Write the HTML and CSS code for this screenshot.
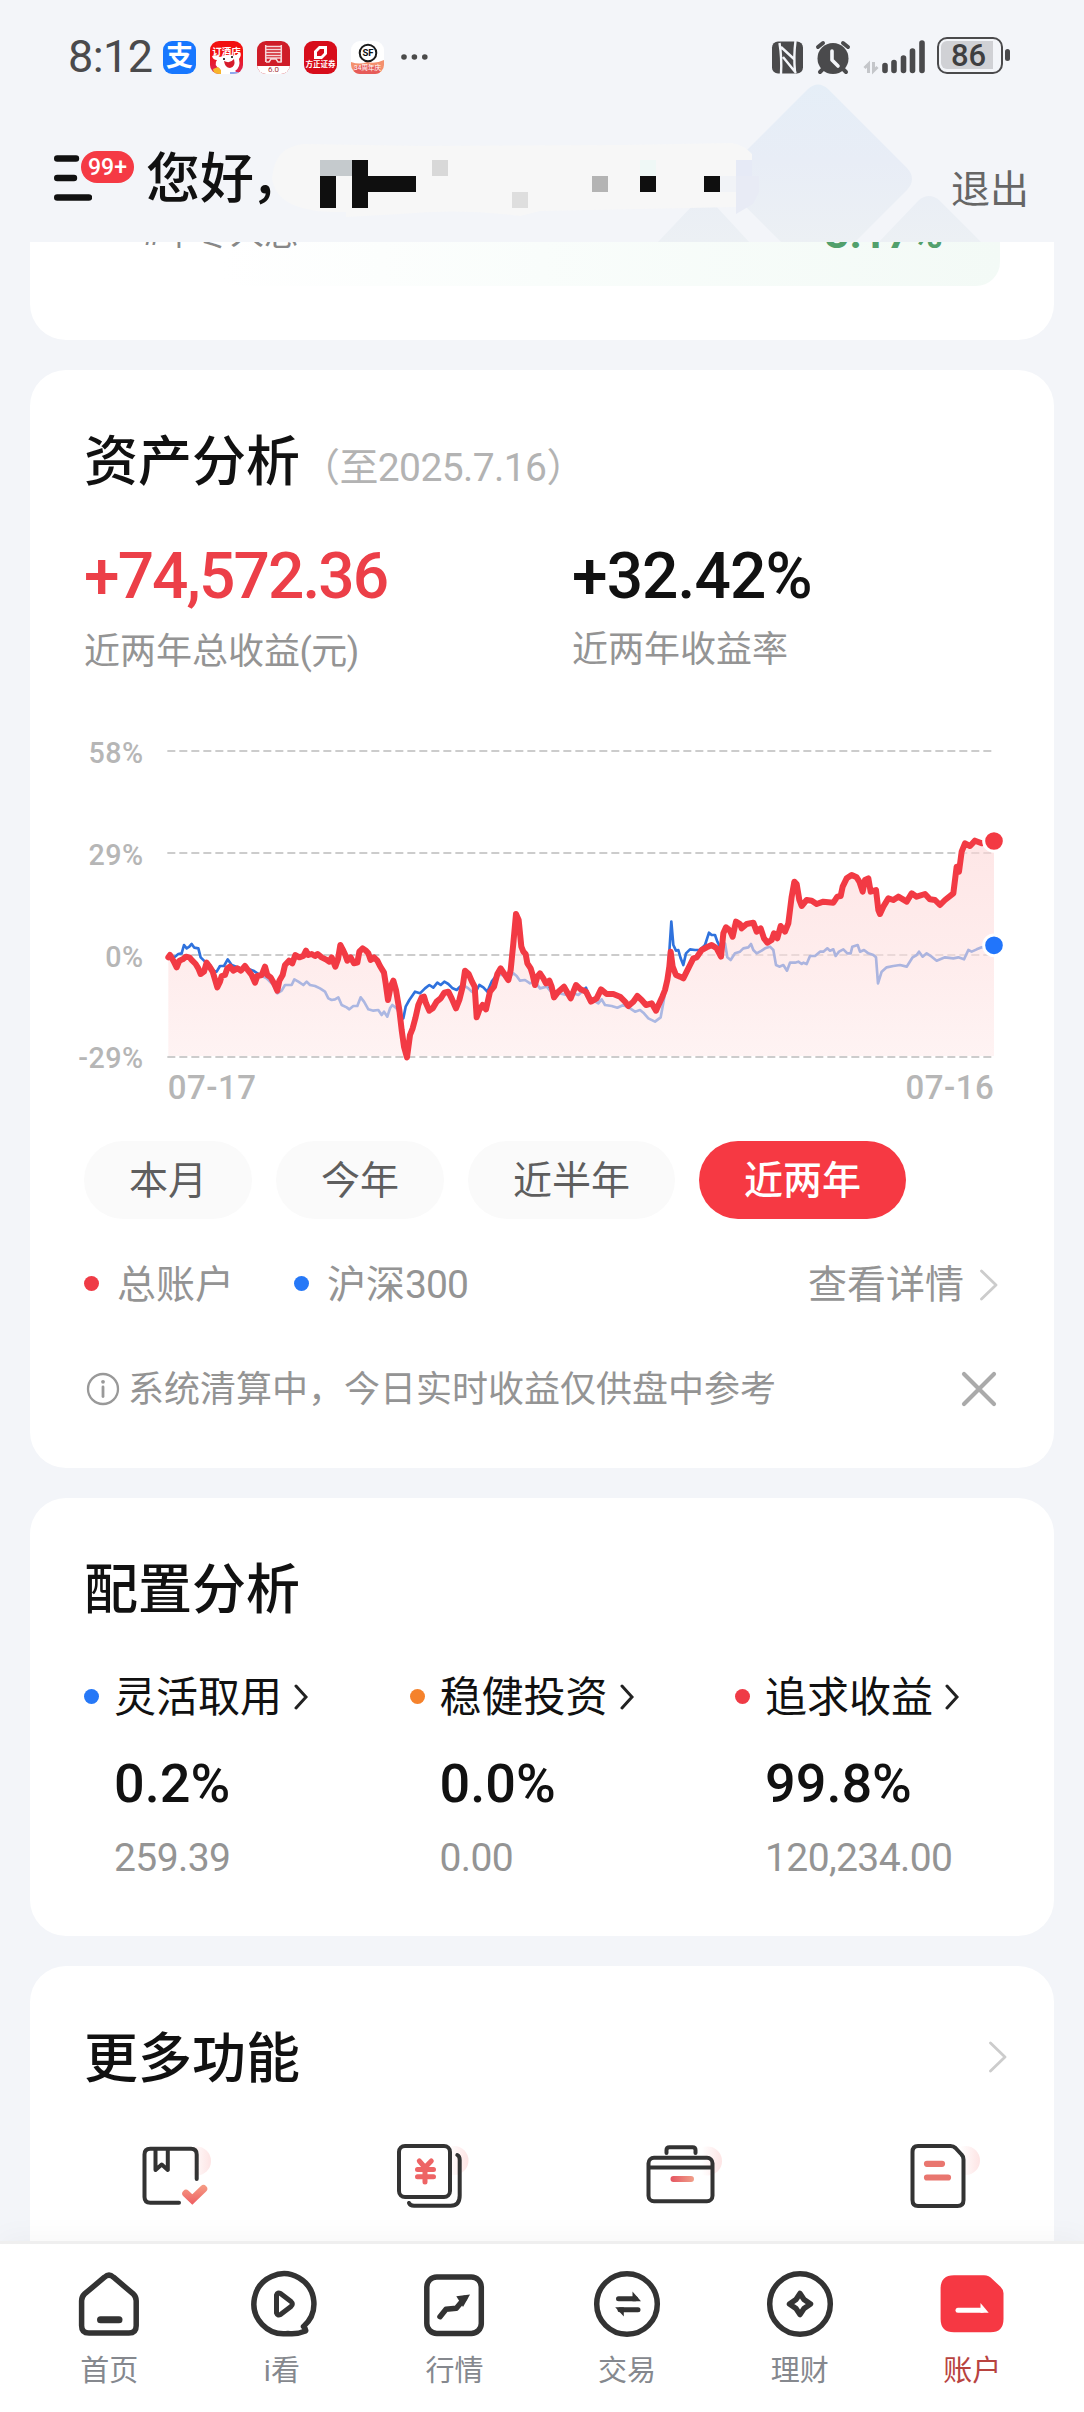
FILE: index.html
```html
<!DOCTYPE html>
<html lang="zh-CN">
<head>
<meta charset="utf-8">
<title>账户</title>
<link rel="stylesheet" href="styles.css">
</head>
<body>
<div class="screen">
  <header class="header">
    <svg class="header-art" width="1084" height="242" viewBox="0 0 1084 242">
      <defs>
        <linearGradient id="dia" x1="0" y1="80" x2="0" y2="242" gradientUnits="userSpaceOnUse"><stop offset="0" stop-color="#e5eef7"/><stop offset=".5" stop-color="#e8edf6"/><stop offset="1" stop-color="#ecf0f4"/></linearGradient>
      </defs>
      <g fill="url(#dia)">
        <path d="M808 89q10-9 20 0l79 79q10 11 0 22l-79 79h-20l-79-79q-10-11 0-22z"/>
        <path d="M694 204q10-9 20 0l37 40h-95z"/>
        <path d="M919 200q10-8 20 0l44 44h-106z"/>
      </g>
      <path fill="#f7f7f7" d="M272 178q3-32 32-34l120 2 200-1 108-2q12 2 20 11v7h-4v16h2q-4 14-14 30l-96 2-100 2-20 5q-60-8-120-2l-54 3v-5q-70 2-74-34z"/>
      <path fill="#c5cacd" d="M320 160h32v16h-32z"/>
      <path fill="#0f0f0f" d="M320 176h16v32h-16zM352 160h16v16h48v16h-48v16h-16zM640 176h16v16h-16zM704 176h16v16h-16z"/>
      <path fill="#d8d8d8" d="M432 160h16v16h-16z"/>
      <path fill="#dedede" d="M512 192h16v16h-16z"/>
      <path fill="#b4b4b4" d="M592 176h16v16h-16z"/>
      <path fill="#eff8f6" d="M640 160h16v16h-16z"/>
      <path fill="#e6eaf6" d="M736 160h16v16h-16z"/>
      <path fill="#f1f3f7" d="M720 176h16v16h-16z"/>
      <path fill="#e8ebf5" d="M736 176h23v16l-6 12-17 10z"/>
    </svg>

    <div class="status">
      <span class="clock">8:12</span>
      <div class="apps">
        <span class="app alipay">支</span>
        <span class="app hotel">
          <span class="hotel-text">订酒店</span>
          <svg width="33" height="33" viewBox="0 0 33 33"><path fill="#fff" d="M2 15q5-2 8 1 8-4 15-1l5-4q2 3-1 7 2 8-4 12l4 3H9q2-3 1-5-7-4-3-9-4 0-5-4z"/><path fill="#d61c2c" d="M14 20q6 3 10-2 2 8-4 9-5 0-6-7z"/><circle cx="14" cy="18" r="1"/><circle cx="22" cy="16" r="1"/><path fill="#f7b52c" d="M3 28l5-2 3 3v4H4z"/><path fill="#8fa8ef" d="M20 31h9l-3 2h-6z"/></svg>
        </span>
        <span class="app bank">
          <svg width="33" height="33" viewBox="0 0 33 33"><path fill="#fff" d="M0 25h33v8H0z"/><path fill="none" stroke="#f6d5d8" stroke-width="1.500" d="M8 5.500h17M8 8.500h17M8 11.500h17M8 14.500h17M8.700 4v17M24.300 4v17M9 21v-4h15v4h-3l-2-3h-5l-2 3H9"/></svg>
          <span class="bank-text">6.0</span>
        </span>
        <span class="app founder">
          <svg width="33" height="20" viewBox="0 0 33 20"><path fill="#fff" fill-rule="evenodd" d="M15 5h8v8l-5 5h-8v-8zm1 3-3 3v4h4l3-3V8z"/></svg>
          <span class="founder-text">方正证券</span>
        </span>
        <span class="app sf">
          <svg width="33" height="33" viewBox="0 0 33 33"><path fill="#f4906e" d="M0 21q9 3 16 0 9 2 17-2v14H0z"/><path fill="#e65b59" d="M4 26q12-4 25 0v7H3z"/><circle cx="17" cy="12" r="8.300" fill="none" stroke="#1a1a1a" stroke-width="2"/></svg>
          <span class="sf-logo">SF</span><span class="sf-text">34周年庆</span>
        </span>
      </div>
      <svg class="more" width="28" height="8" viewBox="0 0 28 8"><g fill="#4a4a4a"><circle cx="4" cy="4" r="2.800"/><circle cx="14.400" cy="4" r="2.800"/><circle cx="24.800" cy="4" r="2.800"/></g></svg>
      <svg class="signals" width="160" height="44" viewBox="765 34 160 44">
        <rect x="772" y="40.500" width="31" height="32" rx="6" fill="#4a4a4c"/>
        <path fill="none" stroke="#f3f5f9" stroke-width="2.400" d="M779.500 42q2.500 15 1.500 31M795.500 40q-2 15-.5 31M781 46l13 12M783 56l13 16"/>
        <circle cx="833" cy="57.500" r="15.500" fill="#4a4a4c"/>
        <path stroke="#4a4a4c" stroke-width="4" stroke-linecap="round" d="M818 46l5-4M848 46l-5-4M823 68l-3 3M843 68l3 3"/>
        <path fill="none" stroke="#f3f5f9" stroke-width="3.600" stroke-linecap="round" stroke-linejoin="round" d="M832 50v9l6 6"/>
        <path fill="none" stroke="#c4c6ca" stroke-width="3" d="M868.500 72V63l-4 4M873.500 61v9l4-4"/>
        <path stroke="#4a4a4c" stroke-width="5.600" stroke-linecap="round" d="M885 64.500v5M894 61.500v8M903.500 57v12.500M912.500 50v19.500M922 42v27.500"/>
      </svg>
      <div class="battery"><span class="battery-level">86</span></div>
      <span class="battery-nub"></span>
    </div>

    <div class="greeting">
      <svg width="38" height="46" viewBox="0 0 38 46"><path stroke="#111" stroke-width="6.400" stroke-linecap="round" d="M3.200 3.500H22M3.200 23H20M3.200 42.500H35"/></svg>
      <span class="badge">99+</span>
      <span class="hello">您好<span class="comma">，</span></span>
      <a class="logout">退出</a>
    </div>
  </header>

  <main class="content">
    <section class="card peek">
      <div class="peek-strip"><span class="peek-name">#中冬人总</span><span class="peek-value">3.17%</span></div>
    </section>

    <section class="card analysis">
      <div class="title-row"><h2>资产分析</h2><span class="as-of">（至2025.7.16）</span></div>
      <div class="figures">
        <div class="figure"><div class="amount up">+74,572.36</div><div class="caption">近两年总收益<span class="paren">(</span>元<span class="paren">)</span></div></div>
        <div class="figure"><div class="amount ratio">+32.42%</div><div class="caption rate">近两年收益率</div></div>
      </div>
      <svg class="chart" width="970" height="390" viewBox="0 0 2910 1170">
        <defs>
          <linearGradient id="area" x1="0" y1="360" x2="0" y2="1010" gradientUnits="userSpaceOnUse"><stop offset="0" stop-color="#fdd6d6"/><stop offset=".6" stop-color="#fee1e1"/><stop offset="1" stop-color="#feebeb"/></linearGradient>
        </defs>
        <path stroke="#ccc" stroke-width="6" stroke-dasharray="24 12" d="M322 93H2796M322 399H2796M322 705H2796M322 1011H2796"/>
        <polyline class="index-line" points="325,712 345,710 355,702 365,700 372,675 380,685 388,680 395,672 403,683 415,685 422,712 435,725 450,735 460,752 470,755 480,738 492,738 503,718 515,735 540,745 560,745 580,752 600,765 620,775 640,795 652,820 665,812 675,795 695,795 703,778 715,785 730,795 740,785 750,795 765,798 780,805 795,815 805,835 815,840 825,838 835,832 845,855 860,862 868,868 880,858 892,858 902,832 912,845 925,868 940,872 955,870 965,885 972,875 982,890 990,865 997,855 1010,865 1022,890 1030,895 1037,860 1048,840 1065,815 1080,820 1095,805 1108,795 1120,803 1132,788 1142,795 1153,785 1165,792 1178,805 1190,810 1200,800 1210,795 1225,805 1235,815 1245,820 1258,795 1270,802 1282,815 1295,785 1310,765 1330,765 1345,775 1360,760 1370,768 1380,782 1395,780 1410,790 1425,785 1440,805 1460,800 1482,825 1500,820 1520,825 1540,820 1555,825 1578,803 1590,835 1615,850 1625,838 1635,855 1655,858 1672,863 1690,855 1710,865 1725,875 1740,870 1752,880 1765,895 1785,905 1802,892 1807,865 1815,820 1825,740 1834,605 1840,675 1848,692 1855,690 1862,715 1870,735 1878,700 1890,688 1905,690 1920,690 1935,675 1947,638 1955,645 1965,645 1972,665 1985,690 1995,670 2002,712 2012,720 2025,700 2040,695 2050,685 2065,682 2073,672 2080,690 2090,700 2105,692 2115,685 2130,680 2140,690 2148,735 2158,740 2170,735 2181,752 2190,728 2205,728 2215,725 2225,732 2230,728 2240,732 2250,708 2265,708 2280,695 2290,695 2302,685 2310,692 2320,688 2327,708 2337,695 2350,688 2362,700 2372,700 2377,680 2393,675 2400,695 2412,690 2425,700 2440,705 2448,712 2454,790 2465,755 2480,742 2500,738 2520,735 2540,740 2558,712 2570,705 2577,695 2588,710 2600,700 2615,710 2630,722 2655,712 2680,715 2695,712 2712,718 2725,690 2735,695 2750,688 2765,682 2802,675"/>
        <path fill="url(#area)" fill-opacity=".6" d="M325 712 350 742 358 722 378 710 397 722 422 762 440 728 458 755 472 800 485 768 502 745 520 752 555 738 585 788 615 740 652 812 675 735 706 705 738 692 808 725 826 740 841 675 862 722 892 728 908 685 942 712 972 758 984 840 1000 782 1018 870 1041 1012 1050 945 1066 895 1085 832 1108 872 1153 818 1188 865 1215 752 1244 800 1250 892 1278 868 1302 800 1322 745 1345 780 1368 582 1390 695 1425 795 1440 760 1482 830 1512 800 1532 835 1548 795 1593 845 1623 808 1695 845 1732 828 1788 872 1815 810 1832 695 1848 765 1870 775 1900 715 1955 675 1983 710 1998 622 2028 605 2080 608 2122 668 2175 635 2185 610 2203 485 2225 558 2320 548 2375 465 2448 510 2460 582 2485 535 2595 522 2640 555 2680 520 2705 395 2715 370 2802 363V1008H325z"/>
        <polyline class="account-line" points="325,712 330,705 340,722 350,742 358,722 368,718 378,710 388,712 397,722 407,732 415,745 422,762 432,755 440,728 450,742 458,755 464,775 472,802 480,785 485,768 495,765 502,745 510,740 520,752 532,745 543,752 555,738 565,752 575,765 585,788 592,768 605,765 615,740 622,765 632,772 642,790 652,812 658,782 668,765 675,735 687,722 697,730 706,705 718,712 730,708 738,692 745,705 755,702 765,708 773,702 785,712 797,718 808,725 815,712 826,740 834,718 841,675 848,688 856,705 862,722 872,712 882,730 892,728 898,695 908,685 918,692 925,700 932,720 942,712 952,722 960,738 972,758 977,790 984,840 992,800 1000,782 1008,810 1018,870 1025,930 1032,980 1041,1012 1050,945 1058,925 1066,895 1075,855 1085,832 1092,830 1098,850 1108,872 1118,865 1130,845 1142,835 1153,818 1165,815 1175,835 1188,865 1198,840 1208,800 1215,752 1226,762 1236,785 1244,800 1250,892 1258,870 1268,855 1278,868 1290,815 1302,800 1312,762 1322,745 1335,765 1345,780 1352,750 1360,670 1368,582 1376,600 1384,680 1390,695 1397,702 1402,730 1412,745 1418,765 1425,795 1432,770 1440,760 1450,775 1458,790 1468,782 1475,800 1482,832 1495,815 1512,800 1532,835 1548,795 1562,808 1578,815 1593,845 1610,835 1623,808 1640,822 1660,822 1680,830 1695,845 1705,858 1720,845 1732,828 1745,840 1758,855 1775,850 1788,872 1798,850 1807,830 1815,810 1822,780 1828,740 1832,695 1838,740 1848,765 1860,770 1870,775 1880,755 1890,735 1900,715 1910,712 1925,690 1940,682 1955,675 1970,685 1983,710 1990,640 1998,622 2010,632 2018,650 2028,605 2040,612 2045,625 2060,612 2080,608 2090,635 2102,625 2112,655 2122,668 2135,660 2142,640 2152,655 2162,618 2175,635 2185,610 2195,530 2203,485 2210,492 2218,540 2225,558 2240,540 2255,542 2270,552 2290,545 2320,548 2332,530 2342,528 2348,500 2360,475 2375,465 2390,472 2398,485 2408,515 2415,480 2425,475 2432,515 2448,510 2455,570 2460,582 2470,560 2485,535 2500,540 2515,530 2540,545 2555,520 2570,530 2595,522 2610,538 2625,540 2640,555 2655,540 2680,520 2690,440 2697,455 2705,395 2715,370 2730,378 2745,362 2765,370 2802,363"/>
        <g stroke="#fff" stroke-width="9"><circle cx="2802" cy="363" r="31" fill="#f33a43"/><circle cx="2802" cy="676" r="31" fill="#2175fb"/></g>
        <g class="axis" text-anchor="end"><text x="251" y="128">58%</text><text x="251" y="434">29%</text><text x="251" y="740">0%</text><text x="251" y="1043">-29%</text></g>
        <g class="dates"><text x="323" y="1137">07-17</text><text x="2803" y="1137" text-anchor="end">07-16</text></g>
      </svg>
      <div class="chips"><span class="chip">本月</span><span class="chip">今年</span><span class="chip">近半年</span><span class="chip active">近两年</span></div>
      <div class="legend">
        <i class="dot red"></i><span>总账户</span><i class="dot blue second"></i><span>沪深<span class="code">300</span></span>
        <a class="detail">查看详情<svg width="18" height="32" viewBox="0 0 18 32"><path fill="none" stroke="#ccc" stroke-width="2.800" stroke-linecap="round" stroke-linejoin="round" d="M1.500 2 16 16 1.500 30"/></svg></a>
      </div>
      <div class="notice">
        <svg width="34" height="34" viewBox="0 0 34 34"><circle cx="17" cy="17" r="15" fill="none" stroke="#999" stroke-width="2.300"/><path stroke="#999" stroke-width="2.800" stroke-linecap="round" d="M17 15v9.500"/><circle cx="17" cy="9.800" r="1.900" fill="#999"/></svg>
        <span>系统清算中，今日实时收益仅供盘中参考</span>
        <svg class="close" width="36" height="36" viewBox="0 0 36 36"><path stroke="#aaa" stroke-width="4.200" stroke-linecap="round" d="M3 3l30 30M33 3 3 33"/></svg>
      </div>
    </section>

    <section class="card allocation">
      <div class="title-row"><h2>配置分析</h2></div>
      <div class="alloc-grid">
        <div class="alloc"><div class="alloc-name"><i class="dot blue"></i><span>灵活取用</span><svg width="14" height="26" viewBox="0 0 14 26"><path d="M2 2l10 11L2 24"/></svg></div><div class="share">0.2%</div><div class="sum">259.39</div></div>
        <div class="alloc"><div class="alloc-name"><i class="dot orange"></i><span>稳健投资</span><svg width="14" height="26" viewBox="0 0 14 26"><path d="M2 2l10 11L2 24"/></svg></div><div class="share">0.0%</div><div class="sum">0.00</div></div>
        <div class="alloc"><div class="alloc-name"><i class="dot red"></i><span>追求收益</span><svg width="14" height="26" viewBox="0 0 14 26"><path d="M2 2l10 11L2 24"/></svg></div><div class="share">99.8%</div><div class="sum">120,234.00</div></div>
      </div>
    </section>

    <section class="card features">
      <div class="title-row"><h2>更多功能</h2><svg class="more-arrow" width="18" height="32" viewBox="0 0 18 32"><path fill="none" stroke="#ccc" stroke-width="2.800" stroke-linecap="round" stroke-linejoin="round" d="M1.500 2 16 16 1.500 30"/></svg></div>
      <div class="feature-row">
        <svg width="90" height="80" viewBox="0 0 90 80">
          <defs>
            <linearGradient id="glow"><stop offset=".3" stop-color="#fde4e4" stop-opacity="0"/><stop offset="1" stop-color="#fde4e4"/></linearGradient>
            <linearGradient id="heart" x1="0" y1="46" x2="0" y2="64" gradientUnits="userSpaceOnUse"><stop offset="0" stop-color="#f59a83"/><stop offset="1" stop-color="#ee6063"/></linearGradient>
          </defs>
          <circle cx="60.500" cy="21" r="14.500" fill="url(#glow)"/>
          <path class="ink" d="M60.700 39V14.500q0-5.700-5.700-5.700H14.300q-5.800 0-5.800 5.700V57q0 5.700 5.800 5.700H43M19.500 9v21l6.200-5.500 6.100 5.500V9"/>
          <path fill="none" stroke="url(#heart)" stroke-width="7.500" stroke-linecap="round" d="M50 53.500l6.300 6 11.200-10.700"/>
          <path fill="url(#heart)" d="M51 55l5.300 9.300L62 57.500z"/>
        </svg>
        <svg width="90" height="80" viewBox="0 0 90 80">
          <circle cx="64" cy="20.500" r="14.500" fill="url(#glow)"/>
          <rect class="ink" x="9" y="6" width="51" height="51" rx="6"/>
          <path class="ink" d="M67.300 15q2.400 1 2.400 5v35.500q0 10.200-9 10.200H24q-4 0-5-2.700"/>
          <path fill="none" stroke="#ee6465" stroke-width="5" stroke-linecap="round" stroke-linejoin="round" d="M29.300 21l5.700 6.500 6.300-6.500M27.500 29.500h16M27.500 36.700h16M35 28v14"/>
        </svg>
        <svg width="90" height="80" viewBox="0 0 90 80">
          <defs><linearGradient id="dash" x1="24" y1="0" x2="50" y2="0" gradientUnits="userSpaceOnUse"><stop offset="0" stop-color="#e44c5c"/><stop offset="1" stop-color="#f0a08a"/></linearGradient></defs>
          <circle cx="63.500" cy="21" r="14.500" fill="url(#glow)"/>
          <rect class="ink" x="4.500" y="17.800" width="64" height="43.400" rx="5.500"/>
          <path class="ink" d="M5 27.500h63M22.500 13V10q0-2.700 3-2.700h23q3 0 3 2.700v3"/>
          <path stroke="url(#dash)" stroke-width="6" stroke-linecap="round" d="M29.500 38.900l17.500.1"/>
        </svg>
        <svg width="90" height="80" viewBox="0 0 90 80">
          <circle cx="67.500" cy="20.500" r="14.500" fill="url(#glow)"/>
          <path class="ink" d="M20 6h32.500q3 0 5 2l6 6.500q2 2 2 5V60q0 6-6 6H20q-5.500 0-5.500-6V12q0-6 5.500-6z"/>
          <path stroke="#e9766f" stroke-width="6.200" stroke-linecap="round" d="M29 23.800h15M29 37.500h21"/>
        </svg>
      </div>
    </section>
  </main>

  <nav class="tabs">
    <a class="tab"><svg width="72" height="72" viewBox="0 0 72 72"><path class="tab-ink" d="M31.500 9.200q4.500-4 9 0l20 17q2.700 2.700 2.700 6.500v25q0 7.300-7.300 7.300H16q-7.400 0-7.400-7.300v-25q0-3.800 2.700-6.500z"/><path stroke="#333" stroke-width="7" stroke-linecap="round" d="M27.500 51.700h18.500"/></svg>首页</a>
    <a class="tab"><svg width="72" height="72" viewBox="0 0 72 72"><path class="tab-ink" d="M57.500 58.500A30 30 0 1 0 42 65.500q9 1 17.500-2.500 1-1.500-2-4.500z"/><path class="tab-ink thin" d="M30.500 27q1-3 4-1.500l10.500 8q2.700 2.500 0 5l-10.500 8q-3 1.500-4-1.500z"/></svg>i看</a>
    <a class="tab"><svg width="72" height="72" viewBox="0 0 72 72"><rect class="tab-ink" x="8.800" y="8.900" width="54.500" height="56.500" rx="10"/><path class="tab-ink" d="M22 48.700l6-7.400 10.300-1 8.200-9.800"/><path fill="#333" d="M38.300 28.200l13.700-1.700-7 12.500z"/></svg>行情</a>
    <a class="tab"><svg width="72" height="72" viewBox="0 0 72 72"><circle class="tab-ink" cx="36" cy="36" r="30.300"/><path stroke="#333" stroke-width="5" stroke-linecap="round" d="M27.500 30.800h17M29 41.800h18"/><path fill="#333" d="M41.500 23.500l8.500 9.800h-8.500zM32.800 48.500l-8.600-9.200h8.600z"/></svg>交易</a>
    <a class="tab"><svg width="72" height="72" viewBox="0 0 72 72"><circle class="tab-ink" cx="36" cy="36" r="30.300"/><path class="tab-ink" d="M36 25.500l4 6 6.500 4.500-6.500 4.500-4 6-4-6-6.500-4.500 6.500-4.500z"/></svg>理财</a>
    <a class="tab current"><svg width="72" height="72" viewBox="0 0 72 72"><path fill="#f63843" d="M18 7.300h30q5 0 8.500 4l8 7.500q3 3 3 6.500V51q0 13.300-13 13.300H18Q4.600 64.300 4.600 51V20.500Q4.600 7.300 18 7.300z"/><path stroke="#fff" stroke-width="5" stroke-linecap="round" d="M22 42.200h24"/><path fill="#fff" d="M44.500 35l8.200 9.700h-8.200z"/></svg>账户</a>
  </nav>
</div>
</body>
</html>
```
FILE: styles.css
```css
* { box-sizing: border-box; }
body { margin: 0; background: #f3f5f9; color: #111; font-family: Roboto, "Noto Sans CJK SC", sans-serif; }
svg { display: block; flex: none; }
h2 { margin: 2px 0 0; font-size: 54px; line-height: 60px; font-weight: 500; }

.screen { width: 1084px; height: 2412px; display: flex; flex-direction: column; overflow: hidden; }

.header { position: relative; height: 242px; flex: none; }
.header-art { position: absolute; left: 0; top: 0; }
.status { position: relative; display: flex; align-items: center; height: 114px; padding-left: 68px; }
.clock { width: 95px; font-size: 45px; line-height: 50px; color: #4a4a4c; white-space: nowrap; letter-spacing: -.6px; }
.apps { display: flex; gap: 14px; }
.app { position: relative; display: block; width: 33px; height: 33px; border-radius: 9px; overflow: hidden; text-align: center; white-space: nowrap; }
.app svg { position: absolute; left: 0; top: 0; }
.alipay { background: #1777ff; color: #fff; font-size: 27px; line-height: 32px; font-weight: 700; }
.hotel { background: linear-gradient(#f21111 40%, #d8295c); }
.hotel-text { display: block; color: #fff; font-size: 9.500px; line-height: 21px; font-weight: 700; }
.bank { background: #cf1c28; }
.bank-text { position: relative; display: block; padding-top: 24px; font-size: 8px; line-height: 9px; color: #a5343b; }
.founder { background: #d70d1b; }
.founder-text { position: relative; display: block; padding-top: 19px; font-size: 7.500px; line-height: 9px; font-weight: 700; color: #fff; }
.sf { background: #fff; }
.sf-logo { position: relative; display: block; padding-left: 1px; font-size: 9.500px; line-height: 24px; font-weight: 700; }
.sf-text { position: relative; display: block; font-size: 6.500px; line-height: 7px; color: #fff; }
.more { margin-left: 16px; }
.signals { margin-left: 337px; margin-top: -1px; }
.battery { width: 66px; height: 37px; margin-left: 12px; margin-top: -3px; padding: 2px; border: 2.500px solid #4a4a4c; border-radius: 10px; }
.battery-level { display: block; width: 52px; height: 28px; border-radius: 6px 0 0 6px; background: #d0d1d5; color: #3f3f41; font-size: 31px; line-height: 29px; font-weight: 500; text-align: center; padding-left: 3px; }
.battery-nub { width: 5px; height: 12px; margin-left: 2px; margin-top: -4px; border-radius: 3px; background: #4a4a4c; }

.greeting { position: relative; display: flex; align-items: flex-start; padding: 0 54px; height: 128px; }
.greeting > svg { margin-top: 41px; }
.badge { position: relative; width: 53px; height: 32px; margin: 37px 0 0 -11px; border-radius: 16px; background: #f53a44; box-shadow: 0 0 0 2px #f3f5f9; color: #fff; font-size: 23px; line-height: 34px; font-weight: 500; text-align: center; }
.hello { margin: 36px 0 0 12px; font-size: 54px; line-height: 60px; font-weight: 500; white-space: nowrap; }
.comma { margin-left: -3px; }
.logout { margin: 51px 1px 0 auto; font-size: 39px; line-height: 50px; color: #666; }

.content { flex: 1; min-height: 0; overflow: hidden; display: flex; flex-direction: column; gap: 30px; padding: 0 30px; }
.card { flex: none; border-radius: 36px; background: #fff; padding: 62px 54px 58px; }
.peek { height: 98px; padding: 0 54px; border-radius: 0 0 36px 36px; }
.peek-strip { display: flex; justify-content: space-between; height: 44px; padding: 0 57px 0 57px; overflow: hidden; border-radius: 0 0 24px 24px; background: linear-gradient(90deg, #fff 15%, #f9fdfb 50%, #f3faf6); line-height: 40px; }
.peek-name { margin-top: -29px; font-size: 34px; color: #888; }
.peek-value { margin-top: -29px; font-size: 43px; font-weight: 700; color: #52a06c; }

.title-row { display: flex; align-items: center; height: 60px; }
.as-of { margin-top: 11px; margin-left: 1px; font-size: 39px; line-height: 44px; letter-spacing: -.6px; color: #b3b3b3; white-space: nowrap; }
.figures { display: grid; grid-template-columns: 488px 1fr; margin-top: 51px; height: 128px; }
.amount { padding-top: 2px; height: 64px; font-size: 64px; line-height: 64px; font-weight: 500; letter-spacing: -1.900px; }
.ratio { letter-spacing: -.9px; }
.up { color: #ec3f48; }
.caption { margin-top: 25px; font-size: 36px; line-height: 40px; color: #949494; }
.caption.rate { margin-top: 23px; }
.paren { display: inline-block; margin: 0 -.5px; }
.chart { margin: 49px 0 0 -24px; overflow: visible; }
.index-line { fill: none; stroke: #2f72dd; stroke-width: 8; stroke-linejoin: round; }
.account-line { fill: none; stroke: #f23a44; stroke-width: 18; stroke-linejoin: round; stroke-linecap: round; }
.axis { font-size: 86px; font-weight: 500; letter-spacing: 1.500px; fill: #b6b6b6; }
.dates { font-size: 99px; font-weight: 500; letter-spacing: 1.500px; fill: #b6b6b6; }
.chips { display: flex; gap: 24px; margin-top: 31px; }
.chip { height: 78px; padding: 0 45px; border-radius: 39px; background: #fafafa; color: #5e5e5e; font-size: 39px; line-height: 80px; }
.chip.active { background: #f63943; color: #fff; font-weight: 500; }
.legend { display: flex; align-items: center; height: 40px; margin-top: 46px; font-size: 39px; line-height: 40px; color: #949494; }
.dot { flex: none; width: 15px; height: 15px; border-radius: 50%; margin: -3px 18px 0 0; }
.dot.red { background: #ef3b46; }
.dot.blue { background: #2678f7; }
.dot.orange { background: #f5822c; }
.dot.second { margin-left: 60px; }
.code { letter-spacing: -.9px; }
.detail { display: flex; align-items: center; gap: 16px; margin-left: auto; margin-right: 2px; }
.notice { display: flex; align-items: center; height: 40px; margin-top: 65px; padding: 0 3px 0 2px; font-size: 36px; line-height: 40px; color: #949494; }
.notice span { margin-left: 8px; }
.notice svg { margin-top: -2px; }
.notice .close { margin-left: auto; }

.alloc-grid { display: grid; grid-template-columns: repeat(3, 325.500px); margin-top: 56px; }
.alloc-name { display: flex; align-items: center; height: 44px; font-size: 42px; line-height: 44px; }
.alloc-name .dot { margin-right: 15px; }
.alloc-name svg { margin: -3px 0 0 12px; }
.alloc-name path { fill: none; stroke: #222; stroke-width: 3; stroke-linecap: round; }
.share { margin: 36px 0 0 30px; font-size: 54px; line-height: 56px; font-weight: 500; }
.sum { margin: 26px 0 0 30px; font-size: 39px; line-height: 40px; letter-spacing: -.6px; color: #949494; }

.features { height: 320px; padding-top: 63px; }
.more-arrow { margin-left: auto; margin-right: -7px; margin-top: -5px; }
.feature-row { display: grid; grid-template-columns: repeat(4, 254px); margin: 51px 0 0 52px; }
.ink { fill: none; stroke: #333; stroke-width: 4; stroke-linecap: round; stroke-linejoin: round; }

.tabs { position: relative; flex: none; height: 171px; display: grid; grid-template-columns: repeat(6, 172.600px); padding: 24px 0 0 23px; border-top: 3px solid #efefef; background: #fff; box-shadow: 0 -4px 26px rgba(0, 0, 0, .035); }
.tab { display: flex; flex-direction: column; align-items: center; gap: 13px; font-size: 29px; line-height: 36px; color: #85888e; }
.tab.current { color: #b8433f; }
.tab-ink { fill: none; stroke: #333; stroke-width: 5.500; stroke-linecap: round; stroke-linejoin: round; }
.thin { stroke-width: 5; }
```
